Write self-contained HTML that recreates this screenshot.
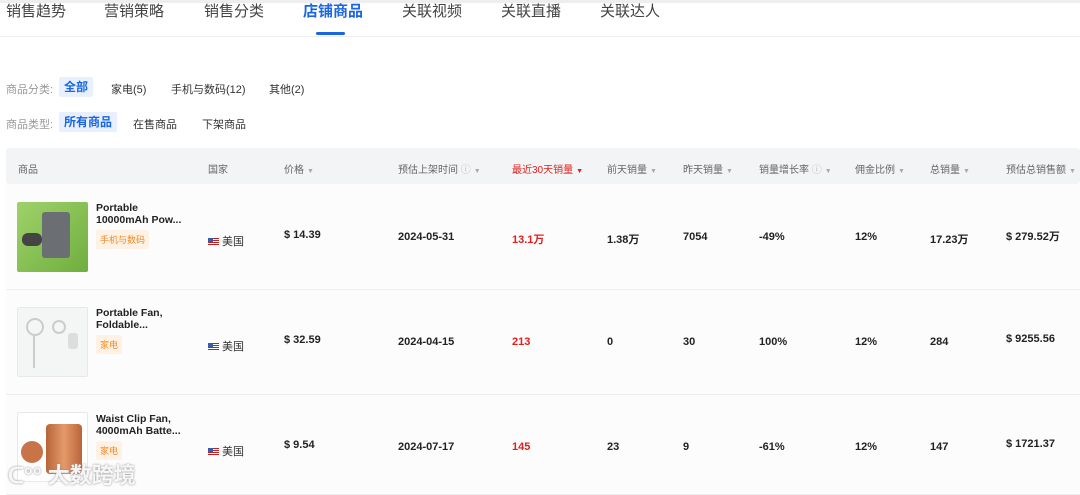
<!DOCTYPE html>
<html><head><meta charset="utf-8"><style>
*{margin:0;padding:0;box-sizing:border-box}
body{width:1080px;height:491px;overflow:hidden;background:#fff;font-family:"Liberation Sans","Noto Sans CJK SC",sans-serif;color:#333;position:relative}
.a{position:absolute;white-space:nowrap}
.tab{font-size:15px;color:#444;top:0px}
.f{font-size:11px;color:#333}
.lab{font-size:11px;color:#999}
.pill{background:#e8f0fd;color:#1a66e0;font-weight:bold;padding:3px 5px;border-radius:2px;font-size:12px}
.h{font-size:10px;color:#666;top:161px}
.arr{color:#aaa;font-size:7px;margin-left:3px}
.v{font-size:11px;font-weight:bold;color:#222}
.red{color:#e0201c}
.row{position:absolute;left:6px;width:1074px;background:#fcfcfc;border-bottom:1px solid #eee}
.tag{font-size:9px;color:#f08a24;background:#fff1e4;padding:3px 4px;border-radius:2px}
.flag{display:inline-block;width:11px;height:7px;background:linear-gradient(#b22 0 14%,#fff 14% 28%,#b22 28% 42%,#fff 42% 57%,#b22 57% 71%,#fff 71% 85%,#b22 85%);position:relative;margin-right:3px;vertical-align:0}
.flag:before{content:"";position:absolute;left:0;top:0;width:5px;height:4px;background:#3c5aa8}
.name{font-size:10.5px;font-weight:bold;color:#222;line-height:12px}
</style></head><body>
<div class="a" style="top:0;left:0;width:1080px;height:3px;background:#eee"></div>
<div class="a tab" style="left:6px">销售趋势</div>
<div class="a tab" style="left:104px">营销策略</div>
<div class="a tab" style="left:204px">销售分类</div>
<div class="a tab" style="left:303px;color:#1a66e0;font-weight:bold">店铺商品</div>
<div class="a tab" style="left:402px">关联视频</div>
<div class="a tab" style="left:501px">关联直播</div>
<div class="a tab" style="left:600px">关联达人</div>
<div class="a" style="left:316px;top:32px;width:29px;height:3px;background:#1a66e0;border-radius:2px"></div>
<div class="a" style="left:0;top:36px;width:1080px;height:1px;background:#eee"></div>

<div class="a lab" style="left:6px;top:81px">商品分类:</div>
<div class="a f" style="left:59px;top:78px"><span class="pill">全部</span></div>
<div class="a f" style="left:111px;top:81px">家电(5)</div>
<div class="a f" style="left:171px;top:81px">手机与数码(12)</div>
<div class="a f" style="left:269px;top:81px">其他(2)</div>
<div class="a lab" style="left:6px;top:116px">商品类型:</div>
<div class="a f" style="left:59px;top:113px"><span class="pill">所有商品</span></div>
<div class="a f" style="left:133px;top:116px">在售商品</div>
<div class="a f" style="left:202px;top:116px">下架商品</div>

<div class="a" style="left:6px;top:148px;width:1074px;height:36px;background:#f3f4f6;border-radius:3px"></div>
<div class="a h" style="left:18px">商品</div>
<div class="a h" style="left:208px">国家</div>
<div class="a h" style="left:284px">价格<span class="arr">▼</span></div>
<div class="a h" style="left:398px">预估上架时间 <span style="color:#bbb">ⓘ</span><span class="arr">▼</span></div>
<div class="a h red" style="left:512px">最近30天销量<span class="arr" style="color:#e0201c">▼</span></div>
<div class="a h" style="left:607px">前天销量<span class="arr">▼</span></div>
<div class="a h" style="left:683px">昨天销量<span class="arr">▼</span></div>
<div class="a h" style="left:759px">销量增长率 <span style="color:#bbb">ⓘ</span><span class="arr">▼</span></div>
<div class="a h" style="left:855px">佣金比例<span class="arr">▼</span></div>
<div class="a h" style="left:930px">总销量<span class="arr">▼</span></div>
<div class="a h" style="left:1006px">预估总销售额<span class="arr">▼</span></div>

<div class="row" style="top:184px;height:106px"></div>
<div class="row" style="top:290px;height:105px"></div>
<div class="row" style="top:395px;height:100px"></div>

<div class="a" style="left:17px;top:202px;width:71px;height:70px;background:linear-gradient(135deg,#9fd26a,#6fae3e);border-radius:2px"></div>
<div class="a" style="left:42px;top:212px;width:28px;height:46px;background:#6b6f73;border-radius:3px"></div>
<div class="a" style="left:22px;top:233px;width:20px;height:13px;background:#444;border-radius:6px"></div>
<div class="a name" style="left:96px;top:202px">Portable<br>10000mAh Pow...</div>
<div class="a tag" style="left:96px;top:230px">手机与数码</div>
<div class="a f" style="left:208px;top:233px"><span class="flag"></span>美国</div>
<div class="a v" style="left:284px;top:229px">$ 14.39</div>
<div class="a v" style="left:398px;top:231px">2024-05-31</div>
<div class="a v red" style="left:512px;top:231px">13.1万</div>
<div class="a v" style="left:607px;top:231px">1.38万</div>
<div class="a v" style="left:683px;top:231px">7054</div>
<div class="a v" style="left:759px;top:231px">-49%</div>
<div class="a v" style="left:855px;top:231px">12%</div>
<div class="a v" style="left:930px;top:231px">17.23万</div>
<div class="a v" style="left:1006px;top:228px">$ 279.52万</div>

<div class="a" style="left:17px;top:307px;width:71px;height:70px;background:#f4f5f5;border:1px solid #e8e8e8;border-radius:2px"></div>
<div class="a" style="left:26px;top:318px;width:18px;height:18px;border:2px solid #ccc;border-radius:50%"></div>
<div class="a" style="left:33px;top:336px;width:2px;height:32px;background:#ccc"></div>
<div class="a" style="left:52px;top:320px;width:14px;height:14px;border:2px solid #ccc;border-radius:50%"></div>
<div class="a" style="left:68px;top:333px;width:10px;height:16px;background:#ddd;border-radius:3px"></div>
<div class="a name" style="left:96px;top:307px">Portable Fan,<br>Foldable...</div>
<div class="a tag" style="left:96px;top:335px">家电</div>
<div class="a f" style="left:208px;top:338px"><span class="flag"></span>美国</div>
<div class="a v" style="left:284px;top:334px">$ 32.59</div>
<div class="a v" style="left:398px;top:336px">2024-04-15</div>
<div class="a v red" style="left:512px;top:336px">213</div>
<div class="a v" style="left:607px;top:336px">0</div>
<div class="a v" style="left:683px;top:336px">30</div>
<div class="a v" style="left:759px;top:336px">100%</div>
<div class="a v" style="left:855px;top:336px">12%</div>
<div class="a v" style="left:930px;top:336px">284</div>
<div class="a v" style="left:1006px;top:333px">$ 9255.56</div>

<div class="a" style="left:17px;top:412px;width:71px;height:70px;background:#fff;border:1px solid #e8e8e8;border-radius:2px"></div>
<div class="a" style="left:46px;top:424px;width:36px;height:50px;background:linear-gradient(90deg,#b8643a,#e59a6a,#b8643a);border-radius:4px"></div>
<div class="a" style="left:21px;top:441px;width:22px;height:22px;background:#c87448;border-radius:50%"></div>
<div class="a name" style="left:96px;top:413px">Waist Clip Fan,<br>4000mAh Batte...</div>
<div class="a tag" style="left:96px;top:441px">家电</div>
<div class="a f" style="left:208px;top:443px"><span class="flag"></span>美国</div>
<div class="a v" style="left:284px;top:439px">$ 9.54</div>
<div class="a v" style="left:398px;top:441px">2024-07-17</div>
<div class="a v red" style="left:512px;top:441px">145</div>
<div class="a v" style="left:607px;top:441px">23</div>
<div class="a v" style="left:683px;top:441px">9</div>
<div class="a v" style="left:759px;top:441px">-61%</div>
<div class="a v" style="left:855px;top:441px">12%</div>
<div class="a v" style="left:930px;top:441px">147</div>
<div class="a v" style="left:1006px;top:438px">$ 1721.37</div>

<div class="a" style="left:8px;top:458px;font-size:22px;color:rgba(255,255,255,.9);text-shadow:0 0 2px #888;font-weight:bold">ᑕ°° 大数跨境</div>
</body></html>
